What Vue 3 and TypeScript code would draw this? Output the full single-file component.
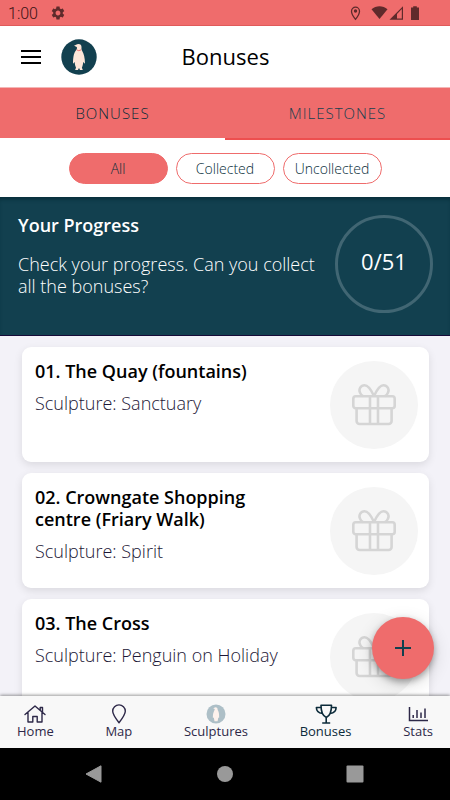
<script setup lang="ts">
import { computed, ref } from 'vue'

interface Bonus {
  id: number
  title: string
  sculpture: string
  collected: boolean
}

type Filter = 'All' | 'Collected' | 'Uncollected'

const sections = ['Bonuses', 'Milestones']
const activeSection = ref('Bonuses')

const filters: Filter[] = ['All', 'Collected', 'Uncollected']
const activeFilter = ref<Filter>('All')

const total = 51
const bonuses = ref<Bonus[]>([
  { id: 1, title: '01. The Quay (fountains)', sculpture: 'Sanctuary', collected: false },
  { id: 2, title: '02. Crowngate Shopping centre (Friary Walk)', sculpture: 'Spirit', collected: false },
  { id: 3, title: '03. The Cross', sculpture: 'Penguin on Holiday', collected: false },
])

const collectedCount = computed(() => bonuses.value.filter((b) => b.collected).length)
const visibleBonuses = computed(() =>
  bonuses.value.filter(
    (b) => activeFilter.value === 'All' || b.collected === (activeFilter.value === 'Collected'),
  ),
)
</script>

<template>
  <div class="screen">
    <div class="status">
      <div class="status-group">
        <span class="clock">1:00</span>
        <svg class="gear" viewBox="0 0 24 24" aria-hidden="true">
          <path fill="currentColor" d="M19.14 12.94c.04-.3.06-.61.06-.94 0-.32-.02-.64-.07-.94l2.03-1.58c.18-.14.23-.41.12-.61l-1.92-3.32c-.12-.22-.37-.29-.59-.22l-2.39.96c-.5-.38-1.03-.7-1.62-.94L14.4 2.81c-.04-.24-.24-.41-.48-.41h-3.84c-.24 0-.43.17-.47.41l-.36 2.54c-.59.24-1.13.57-1.62.94l-2.39-.96c-.22-.08-.47 0-.59.22L2.74 8.87c-.12.21-.08.47.12.61l2.03 1.58c-.05.3-.09.63-.09.94s.02.64.07.94l-2.03 1.58c-.18.14-.23.41-.12.61l1.92 3.32c.12.22.37.29.59.22l2.39-.96c.5.38 1.03.7 1.62.94l.36 2.54c.05.24.24.41.48.41h3.84c.24 0 .44-.17.47-.41l.36-2.54c.59-.24 1.13-.56 1.62-.94l2.39.96c.22.08.47 0 .59-.22l1.92-3.32c.12-.22.07-.47-.12-.61l-2.01-1.58zM12 15.6c-1.98 0-3.6-1.62-3.6-3.6s1.62-3.6 3.6-3.6 3.6 1.62 3.6 3.6-1.62 3.6-3.6 3.6z" />
        </svg>
      </div>
      <svg class="signals" viewBox="0 0 72 16" aria-hidden="true">
        <path d="M5.500 14.300C2.500 10.600 1.500 8.400 1.500 6.200a4 4 0 0 1 8 0c0 2.200-1 4.400-4 8.100z" fill="none" stroke="currentColor" stroke-width="1.300" />
        <circle cx="5.500" cy="6" r="1.700" fill="currentColor" />
        <path d="M21.500 4.200C26 .2 33 .2 37.500 4.200L29.500 14z" fill="currentColor" />
        <path d="M39.500 14.700L53 1.300V14.700z" fill="currentColor" />
        <path d="M47 8.900l4.800-4.800v9.400H47z" fill="#ef6c6c" />
        <path d="M61 2.500h2.200V1.200h3.600v1.300H69V15h-8z" fill="currentColor" />
      </svg>
    </div>

    <header class="toolbar">
      <button class="menu" type="button" aria-label="Menu">
        <svg viewBox="0 0 20 14" aria-hidden="true">
          <path d="M0 1h20M0 7h20M0 13h20" stroke="currentColor" stroke-width="1.800" />
        </svg>
      </button>
      <svg class="logo" viewBox="0 0 36 36" aria-hidden="true">
        <circle cx="18" cy="18" r="17.700" fill="#12404f" />
        <path fill="#fde6d8" d="M13 6.600c1.600-.4 2.400-1.700 4.500-1.700 1.900 0 3 1.200 3 3 0 1.500-.2 2.700.7 4.100 1.600 2.400 2.700 6.500 2.800 12.800l-1.800-1.900c-.2 2.500-.7 4.200-1.300 5.900l.9 2.200h-2.900l-.4-1.500h-1l-.5 1.500h-2.900l.9-2.300c-.7-1.600-1.200-3.500-1.400-5.800l-1.600 1.900c0-6.300.7-10 2.500-12.800.9-1.400 1.600-2 1.500-3.600-.8-.9-1.900-.9-3-1.800z" />
        <path d="M15.800 10.900q1.700 1.500 4.200 0" fill="none" stroke="#ef6c6c" stroke-width="1" />
      </svg>
      <h1>Bonuses</h1>
    </header>

    <div class="sections" role="tablist">
      <button
        v-for="s in sections"
        :key="s"
        type="button"
        role="tab"
        :aria-selected="activeSection === s"
        :class="['section', { active: activeSection === s }]"
        @click="activeSection = s"
      >
        {{ s }}
      </button>
    </div>

    <div class="filters">
      <button
        v-for="f in filters"
        :key="f"
        type="button"
        :class="['chip', { active: activeFilter === f }]"
        @click="activeFilter = f"
      >
        {{ f }}
      </button>
    </div>

    <section class="progress">
      <div class="progress-text">
        <h2>Your Progress</h2>
        <p>Check your progress. Can you collect all the bonuses?</p>
      </div>
      <div class="ring">{{ collectedCount }}/{{ total }}</div>
    </section>

    <main class="content">
      <ul class="list">
        <li v-for="b in visibleBonuses" :key="b.id" class="card">
          <div class="card-text">
            <h3>{{ b.title }}</h3>
            <p>Sculpture: {{ b.sculpture }}</p>
          </div>
          <div class="badge">
            <svg viewBox="0 0 44 42" aria-hidden="true">
              <g fill="none" stroke="currentColor" stroke-width="2.600" stroke-linejoin="round">
                <rect x="1.300" y="12.200" width="41.400" height="12" rx="2.500" />
                <path d="M4.600 24.200V37a3 3 0 0 0 3 3h29a3 3 0 0 0 3-3V24.200M18 12.200V40M26 12.200V40" />
                <path d="M22 12C19 5.500 16 1.300 12.500 1.300A5 5 0 0 0 8 8.500c.6 2 1.800 3 3 3.700M22 12c3-6.500 6-10.700 9.500-10.700A5 5 0 0 1 36 8.500c-.6 2-1.800 3-3 3.700" />
              </g>
            </svg>
          </div>
        </li>
      </ul>
      <button class="fab" type="button" aria-label="Add bonus">
        <svg viewBox="0 0 16 16" aria-hidden="true">
          <path d="M8 0v16M0 8h16" stroke="currentColor" stroke-width="2" />
        </svg>
      </button>
    </main>

    <nav class="tabbar">
      <a href="#home">
        <svg viewBox="0 0 22 20" aria-hidden="true">
          <path d="M1 10.500L11 2l10 8.500M4 8.500V18h4.800v-5.500h4.400V18H18V8.500M16.200 6V3.500H18.500V8" fill="none" stroke="currentColor" stroke-width="1.400" stroke-linejoin="round" stroke-linecap="round" />
        </svg>
        Home
      </a>
      <a href="#map">
        <svg viewBox="0 0 22 20" aria-hidden="true">
          <path d="M11 18.700C7 13.500 4.700 10.400 4.700 7.200a6.300 6.300 0 0 1 12.600 0c0 3.200-2.300 6.300-6.300 11.500z" fill="none" stroke="currentColor" stroke-width="1.400" stroke-linejoin="round" />
        </svg>
        Map
      </a>
      <a href="#sculptures">
        <svg viewBox="0 0 22 20" aria-hidden="true">
          <circle cx="11" cy="10" r="9.500" fill="#adbfc7" />
          <path d="M10.500 3.200c1.300 0 2 .7 2 1.900.1 1 .8 1.800 1.200 3.200.4 1.500.5 3.300.4 5.800l-.8-.6-.7 3.800H9.500l-.7-3.800-.9.600c-.1-2.500.1-4.500.8-6.200.5-1.200 1.100-1.700 1-2.800L8.200 4.300c.9-.2 1.300-1.100 2.300-1.100z" fill="#fdf2ed" />
        </svg>
        Sculptures
      </a>
      <a href="#bonuses" class="current" aria-current="page">
        <svg viewBox="0 0 22 20" aria-hidden="true">
          <path d="M6 1.200h10.500c0 6-1.500 10.500-5.200 12.300C7.500 11.700 6 7.200 6 1.200zM6.200 3.500H1.400c0 3.500 2 5.500 6 6M16.300 3.500h4.800c0 3.500-2 5.500-6 6M11.200 13.500V19M7.200 19h8" fill="none" stroke="currentColor" stroke-width="1.600" stroke-linejoin="round" />
        </svg>
        Bonuses
      </a>
      <a href="#stats">
        <svg viewBox="0 0 22 20" aria-hidden="true">
          <path d="M2.500 3v13.500H21M6.200 14v-3M10 14V6M14 14V8.500M18 14V4.500" fill="none" stroke="currentColor" stroke-width="1.500" />
        </svg>
        Stats
      </a>
    </nav>

    <div class="system">
      <button type="button" aria-label="Back">
        <svg viewBox="0 0 18 18" aria-hidden="true"><path d="M1 9L16 .8v16.400z" fill="currentColor" stroke="currentColor" stroke-width="1" stroke-linejoin="round" /></svg>
      </button>
      <button type="button" aria-label="Home screen">
        <svg viewBox="0 0 18 18" aria-hidden="true"><circle cx="9" cy="9" r="8" fill="currentColor" /></svg>
      </button>
      <button type="button" aria-label="Recent apps">
        <svg viewBox="0 0 18 18" aria-hidden="true"><rect x=".5" y=".5" width="17" height="17" rx="1" fill="currentColor" /></svg>
      </button>
    </div>
  </div>
</template>

<style>
body {
  margin: 0;
}
</style>

<style scoped>
.screen {
  display: flex;
  flex-direction: column;
  height: 100vh;
  overflow: hidden;
  background: #f3f2f8;
  font-family: "Open Sans", "Noto Sans", sans-serif;
  color: #000;
}
.screen * {
  box-sizing: border-box;
}
button {
  margin: 0;
  padding: 0;
  border: 0;
  background: none;
  color: inherit;
  font: inherit;
  cursor: pointer;
}
svg {
  display: block;
}
h1,
h2,
h3,
p,
ul {
  margin: 0;
  padding: 0;
}

.status {
  display: flex;
  align-items: center;
  justify-content: space-between;
  height: 26px;
  padding: 0 28px 0 8px;
  background: #ef6c6c;
  border-bottom: 1px solid #e05a5a;
  color: #5f2a2b;
}
.status-group {
  display: flex;
  align-items: center;
  gap: 12px;
}
.clock {
  padding-top: 2px;
  color: #3a1214;
  font-family: Roboto, sans-serif;
  font-size: 16px;
  font-weight: 300;
  line-height: 22px;
}
.gear {
  width: 16px;
  height: 16px;
}
.signals {
  width: 72px;
  height: 16px;
}

.toolbar {
  display: grid;
  grid-template-columns: 20px 36px 1fr 76px;
  align-items: center;
  column-gap: 20px;
  height: 62px;
  padding: 0 20px 0 21px;
  background: #fff;
  border-bottom: 1px solid #f3b6b6;
}
.menu svg {
  width: 20px;
  height: 14px;
}
.logo {
  width: 36px;
  height: 36px;
}
h1 {
  padding-bottom: 2px;
  font-size: 22px;
  line-height: 30px;
  font-weight: 400;
  text-align: center;
}

.sections {
  display: flex;
  background: #ef6c6c;
}
.section {
  flex: 1;
  height: 52px;
  border-bottom: 2px solid #ed4f4f;
  color: #12404f;
  font-size: 15px;
  font-weight: 300;
  letter-spacing: 1px;
  text-transform: uppercase;
}
.section.active {
  border-bottom-color: #fff;
  color: #062c39;
}

.filters {
  display: flex;
  justify-content: center;
  gap: 8px;
  padding: 13px 16px;
  background: #fff;
}
.chip {
  width: 99px;
  height: 31px;
  border: 1px solid #ef6c6c;
  border-radius: 16px;
  background: #fff;
  color: #062c39;
  font-size: 14px;
  font-weight: 300;
}
.chip.active {
  background: #ef6c6c;
}

.progress {
  display: flex;
  align-items: flex-start;
  gap: 12px;
  min-height: 139px;
  padding: 17px 17px 22px 18px;
  background: #12404f;
  border-bottom: 1px solid #160b38;
  box-shadow: inset 0 4px 4px -2px #062c39;
  color: #fff;
}
.progress-text {
  flex: 1;
}
h2 {
  margin-bottom: 17px;
  font-size: 18px;
  line-height: 22px;
  font-weight: 600;
}
.progress p {
  font-size: 18px;
  line-height: 22px;
  font-weight: 300;
}
.ring {
  display: grid;
  align-self: flex-end;
  place-items: center;
  width: 98px;
  height: 98px;
  padding-bottom: 6px;
  border: 3px solid #416673;
  border-radius: 50%;
  font-size: 22px;
}

.content {
  position: relative;
  flex: 1;
  min-height: 0;
}
.list {
  display: flex;
  flex-direction: column;
  gap: 11px;
  height: 100%;
  padding: 11px 21px 11px 22px;
  overflow-y: auto;
  scrollbar-width: none;
  list-style: none;
}
.card {
  display: flex;
  flex: none;
  justify-content: space-between;
  min-height: 115px;
  padding: 13px 11px 13px 13px;
  border-radius: 9px;
  background: #fff;
  box-shadow: 0 3px 8px rgba(0, 0, 0, 0.1);
}
.card-text {
  width: 260px;
}
h3 {
  margin-bottom: 10px;
  font-size: 18px;
  line-height: 22px;
  font-weight: 600;
}
.card p {
  color: #1c1736;
  font-size: 18px;
  line-height: 22px;
  font-weight: 300;
}
.badge {
  display: grid;
  flex: none;
  align-self: center;
  place-items: center;
  width: 88px;
  height: 88px;
  border-radius: 50%;
  background: #f5f5f5;
  color: #d5d5d5;
}
.badge svg {
  width: 44px;
  height: 42px;
}
.fab {
  position: absolute;
  right: 16px;
  bottom: 17px;
  display: grid;
  place-items: center;
  width: 62px;
  height: 62px;
  border-radius: 50%;
  background: #ef6c6c;
  box-shadow: 0 3px 6px rgba(0, 0, 0, 0.3), 0 5px 18px rgba(0, 0, 0, 0.16);
  color: #12404f;
}
.fab svg {
  width: 16px;
  height: 16px;
}

.tabbar {
  position: relative;
  display: flex;
  justify-content: space-between;
  height: 52px;
  padding: 8px 17px 0;
  background: #f8f8f8;
  box-shadow: 0 -1px 3px rgba(0, 0, 0, 0.4);
}
.tabbar a {
  display: flex;
  flex-direction: column;
  align-items: center;
  color: #2d2848;
  font-size: 13px;
  line-height: 15px;
  text-decoration: none;
}
.tabbar a.current {
  color: #0c2b3a;
}
.tabbar svg {
  width: 22px;
  height: 20px;
}

.system {
  position: relative;
  display: flex;
  justify-content: space-between;
  height: 52px;
  padding: 0 86px 0 85px;
  background: #000;
  color: #999;
}
.system svg {
  width: 18px;
  height: 18px;
}
</style>
